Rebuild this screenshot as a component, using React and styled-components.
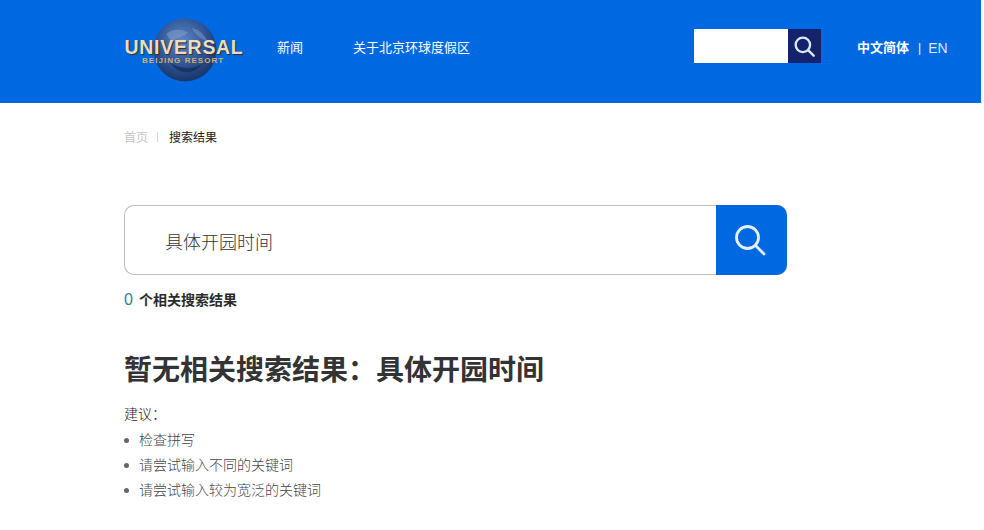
import React from "react";
import styled, { createGlobalStyle } from "styled-components";

const GlobalStyle = createGlobalStyle`
  html, body {
    margin: 0;
    padding: 0;
    background: #fff;
  }
  body {
    font-family: "Liberation Sans", "Noto Sans CJK SC", sans-serif;
    overflow: hidden;
  }
`;

const Page = styled.div`
  width: 984px;
  height: 530px;
  overflow: hidden;
`;

const Header = styled.header`
  width: 981px;
  height: 103px;
  background: #0069e1;
  display: flex;
  align-items: center;
  padding: 0 0 11px 124px;
  box-sizing: border-box;
  color: #fff;
`;

const Logo = styled.div`
  position: relative;
  width: 120px;
  height: 66px;
  margin-top: 8px;
  flex: none;
`;

const LogoGlobe = styled.svg`
  display: block;
  position: absolute;
  left: 29px;
  top: 1px;
`;

const LogoName = styled.span`
  position: absolute;
  left: 0;
  top: 23px;
  width: 120px;
  text-align: center;
  font-size: 19.5px;
  line-height: 14px;
  font-weight: 700;
  letter-spacing: 0.7px;
  color: #eadcc4;
  text-shadow: 1px 1px 1px #3a2c20;
  white-space: nowrap;
`;

const LogoSub = styled.span`
  position: absolute;
  left: 18px;
  top: 39px;
  font-size: 8px;
  line-height: 9px;
  font-weight: 700;
  letter-spacing: 1.05px;
  color: #d2ad72;
  white-space: nowrap;
`;

const Nav = styled.nav`
  display: flex;
  margin: 4px 0 0 33px;
  gap: 50px;
  flex: none;
`;

const NavLink = styled.a`
  font-size: 13px;
  line-height: 20px;
  color: #fff;
`;

const HeaderSearch = styled.div`
  display: flex;
  margin-left: 224px;
  height: 34px;
  flex: none;
`;

const HeaderInput = styled.div`
  width: 94px;
  background: #fff;
`;

const HeaderButton = styled.div`
  width: 33px;
  background: #14236b;
  display: flex;
  align-items: center;
  justify-content: center;
`;

const Lang = styled.div`
  display: flex;
  align-items: center;
  margin: 4px 0 0 36px;
  font-size: 13px;
  line-height: 20px;
  flex: none;
`;

const LangActive = styled.span`
  font-weight: 700;
`;

const LangDivider = styled.span`
  margin: 0 7px 0 9px;
  font-size: 12px;
`;

const LangOther = styled.span`
  font-size: 14px;
  color: #dcebff;
`;

const Main = styled.main`
  padding-left: 124px;
  width: 663px;
  box-sizing: content-box;
`;

const Crumbs = styled.div`
  display: flex;
  align-items: center;
  height: 20px;
  margin-top: 23px;
  font-size: 12px;
`;

const CrumbHome = styled.span`
  color: #c4c4c4;
`;

const CrumbDivider = styled.i`
  width: 1px;
  height: 10px;
  background: #d5d5d5;
  margin: 2px 11px 0 9px;
`;

const CrumbCurrent = styled.span`
  color: #222;
`;

const SearchBox = styled.div`
  display: flex;
  height: 70px;
  margin-top: 59px;
  box-sizing: border-box;
  border: 1px solid #bdbdbd;
  border-right: 0;
  border-radius: 10px;
`;

const SearchText = styled.div`
  flex: 1;
  padding-left: 40px;
  font-size: 18px;
  font-weight: 300;
  line-height: 74px;
  color: #333;
`;

const SearchButton = styled.div`
  width: 71px;
  margin: -1px 0;
  padding-right: 3px;
  box-sizing: border-box;
  background: #0069e1;
  border-radius: 0 10px 10px 0;
  display: flex;
  align-items: center;
  justify-content: center;
`;

const ResultCount = styled.div`
  display: flex;
  margin-top: 15px;
  font-size: 14px;
  line-height: 20px;
  font-weight: 700;
  color: #2b2b2b;
`;

const CountNumber = styled.span`
  width: 15px;
  font-size: 16px;
  font-weight: 400;
  color: #2f7f9c;
`;

const Title = styled.h1`
  margin: 39px 0 0;
  font-size: 28px;
  line-height: 44px;
  font-weight: 700;
  color: #333;
`;

const SuggestLabel = styled.div`
  margin-top: 11px;
  font-size: 14px;
  line-height: 20px;
  font-weight: 300;
  color: #222;
`;

const SuggestList = styled.ul`
  list-style: none;
  margin: 4px 0 0;
  padding: 0;
`;

const SuggestItem = styled.li`
  display: flex;
  align-items: center;
  gap: 10px;
  font-size: 14px;
  line-height: 25px;
  font-weight: 300;
  color: #444;
  &::before {
    content: "";
    width: 5px;
    height: 5px;
    border-radius: 50%;
    background: #666;
  }
`;

function SearchIcon({ size, width, color }) {
  return (
    <svg width={size} height={size} viewBox="0 0 32 32" fill="none" stroke={color} strokeWidth={width} strokeLinecap="round">
      <circle cx="13.5" cy="13.5" r="11" />
      <path d="M21.5 21.5 L30 30" />
    </svg>
  );
}

function App() {
  return (
    <Page>
      <GlobalStyle />
      <Header>
        <Logo>
          <LogoGlobe width="64" height="64" viewBox="0 0 66 66">
            <defs>
              <radialGradient id="globe" cx="45%" cy="35%" r="70%">
                <stop offset="0%" stopColor="#5f86c4" />
                <stop offset="55%" stopColor="#2f5595" />
                <stop offset="100%" stopColor="#142f60" />
              </radialGradient>
            </defs>
            <circle cx="33" cy="33" r="32.5" fill="url(#globe)" />
            <path d="M14 16 C22 10 30 12 36 15 C32 20 24 20 20 24 C17 22 15 20 14 16 Z" fill="#7f9bc6" opacity="0.6" />
            <path d="M40 10 C48 12 54 18 56 24 C50 22 44 18 40 10 Z" fill="#8ba3c9" opacity="0.45" />
            <path d="M18 46 C26 52 38 54 50 48 C44 58 26 60 18 46 Z" fill="#10274f" opacity="0.6" />
          </LogoGlobe>
          <LogoName>UNIVERSAL</LogoName>
          <LogoSub>BEIJING RESORT</LogoSub>
        </Logo>
        <Nav>
          <NavLink>新闻</NavLink>
          <NavLink>关于北京环球度假区</NavLink>
        </Nav>
        <HeaderSearch>
          <HeaderInput />
          <HeaderButton>
            <SearchIcon size={21} width={3.6} color="#dbe8f5" />
          </HeaderButton>
        </HeaderSearch>
        <Lang>
          <LangActive>中文简体</LangActive>
          <LangDivider>|</LangDivider>
          <LangOther>EN</LangOther>
        </Lang>
      </Header>
      <Main>
        <Crumbs>
          <CrumbHome>首页</CrumbHome>
          <CrumbDivider />
          <CrumbCurrent>搜索结果</CrumbCurrent>
        </Crumbs>
        <SearchBox>
          <SearchText>具体开园时间</SearchText>
          <SearchButton>
            <SearchIcon size={32} width={2.8} color="#e6f1ff" />
          </SearchButton>
        </SearchBox>
        <ResultCount>
          <CountNumber>0</CountNumber>
          个相关搜索结果
        </ResultCount>
        <Title>暂无相关搜索结果：具体开园时间</Title>
        <SuggestLabel>建议：</SuggestLabel>
        <SuggestList>
          <SuggestItem>检查拼写</SuggestItem>
          <SuggestItem>请尝试输入不同的关键词</SuggestItem>
          <SuggestItem>请尝试输入较为宽泛的关键词</SuggestItem>
        </SuggestList>
      </Main>
    </Page>
  );
}

export default App;
